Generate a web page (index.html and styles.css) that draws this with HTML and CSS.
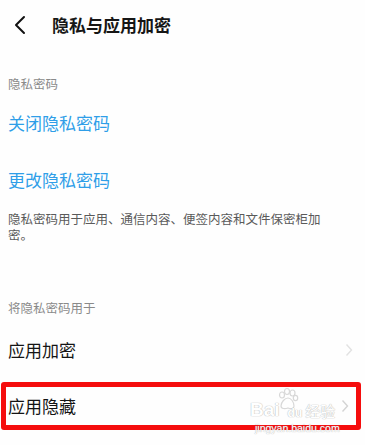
FILE: index.html
```html
<!DOCTYPE html>
<html lang="zh-CN">
<head>
<meta charset="utf-8">
<link rel="stylesheet" href="styles.css">
</head>
<body>
<div class="page">
  <header class="header">
    <svg class="back" width="14" height="20" viewBox="0 0 14 20"><polyline points="11,2 3,10 11,18" fill="none" stroke="#111" stroke-width="2" stroke-linecap="round" stroke-linejoin="round"/></svg>
    <h1 class="title">隐私与应用加密</h1>
  </header>
  <div class="label label-first">隐私密码</div>
  <div class="link link-first">关闭隐私密码</div>
  <div class="link link-second">更改隐私密码</div>
  <p class="desc">隐私密码用于应用、通信内容、便签内容和文件保密柜加密。</p>
  <div class="label label-second">将隐私密码用于</div>
  <div class="row row-first">
    <span class="row-text">应用加密</span>
    <svg class="chev chev-light" width="8" height="14" viewBox="0 0 8 14"><polyline points="1.5,1.5 6.5,7 1.5,12.5" fill="none" stroke="#e2e2e2" stroke-width="1.4"/></svg>
  </div>
  <div class="row row-boxed">
    <span class="row-text">应用隐藏</span>
    <svg class="chev" width="8" height="14" viewBox="0 0 8 14"><polyline points="1.5,1.5 6.5,7 1.5,12.5" fill="none" stroke="#d4d4d4" stroke-width="1.4"/></svg>
    <div class="watermark">
      <div class="wm-top">
        <span class="wm-bai">Bai</span>
        <svg class="wm-paw" width="24" height="24" viewBox="0 0 24 24"><g fill="none" stroke="#d8d8d8" stroke-width="1.2"><ellipse cx="6" cy="8" rx="2.5" ry="3"/><ellipse cx="11" cy="4.5" rx="2.5" ry="3"/><ellipse cx="16.5" cy="6" rx="2.5" ry="3"/><ellipse cx="19.5" cy="11" rx="2.2" ry="2.6"/><path d="M5 19c0-4 4-8 7-8s6 4 6 8c0 3-3 3-6 2-3 1-7 1-7-2z"/></g></svg>
        <span class="wm-du">du</span>
        <span class="wm-jy">经验</span>
      </div>
      <div class="wm-url">jingyan.baidu.com</div>
    </div>
  </div>
</div>
</body>
</html>
```

FILE: styles.css
```css
* { box-sizing: border-box; }
html, body { margin: 0; padding: 0; background: #fefefe; }
body {
  font-family: "Noto Sans CJK SC", "Noto Sans", sans-serif;
  width: 365px;
  height: 445px;
  overflow: hidden;
}
.page { padding: 0; }
.header {
  height: 50px;
  display: flex;
  align-items: center;
  padding-left: 13px;
}
.back { display: block; }
.title {
  margin: 0 0 0 25px;
  font-size: 17px;
  font-weight: 700;
  color: #161616;
  line-height: 24px;
}
.label {
  font-size: 12.5px;
  line-height: 16px;
  color: #8a8a8a;
  padding-left: 8px;
}
.label-first { margin-top: 26px; }
.label-second { margin-top: 57px; }
.link {
  font-size: 17px;
  line-height: 24px;
  color: #2f9ee8;
  padding-left: 8px;
}
.link-first { margin-top: 19px; }
.link-second { margin-top: 33px; }
.desc {
  margin: 19px 0 0 0;
  padding: 0 27px 0 8px;
  font-size: 12.5px;
  line-height: 16px;
  color: #5a5a5a;
}
.row {
  display: flex;
  align-items: center;
  justify-content: space-between;
  padding: 0 12px 0 8px;
  position: relative;
}
.row-text {
  font-size: 17px;
  line-height: 24px;
  color: #141414;
}
.row-first { margin-top: 14px; height: 40px; }
.row-boxed {
  margin: 12px 4px 0 1px;
  height: 48px;
  border: 5px solid #f50d0d;
  border-radius: 3px;
  padding: 0 7px 0 2px;
}
.watermark {
  position: absolute;
  left: 244px;
  top: 0;
  width: 100px;
  color: #fff;
}
.wm-top {
  display: flex;
  align-items: flex-end;
  height: 34px;
}
.wm-bai, .wm-du {
  font-family: "Liberation Sans", sans-serif;
  font-weight: 700;
  color: #fff;
  text-shadow: 0 0 1px #bbb, 0 0 1px #bbb;
}
.wm-bai { font-size: 19px; line-height: 22px; }
.wm-du { font-size: 12px; line-height: 16px; margin-left: -12px; }
.wm-paw { margin-left: -4px; margin-bottom: 10px; }
.wm-jy {
  font-size: 15px;
  line-height: 20px;
  margin-left: 3px;
  color: #fff;
  text-shadow: 0 0 1px #bbb, 0 0 1px #bbb;
}
.wm-url {
  font-family: "Liberation Sans", sans-serif;
  font-size: 10.5px;
  line-height: 10px;
  margin-top: 2px;
  margin-left: 5px;
  color: #fff;
  text-shadow: 0 0 1px #999;
}
```
